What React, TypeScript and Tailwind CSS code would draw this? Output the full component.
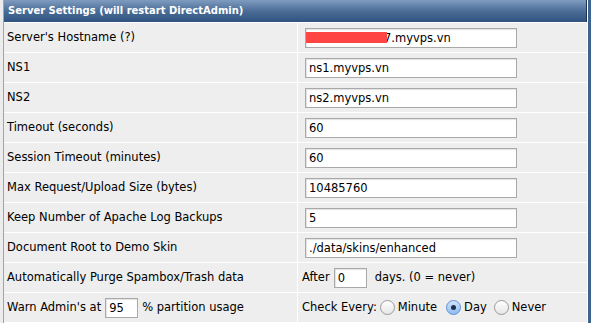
import React from "react";

const font = { fontFamily: '"DejaVu Sans", Verdana, sans-serif' };

function TextBox({ value, w = "w-[212px]", pad = "px-[3px]" }: { value: string; w?: string; pad?: string }) {
  return (
    <input
      readOnly
      value={value}
      className={`${w} ${pad} h-[20px] border border-[#a9a9a9] bg-white text-[11.5px] text-black outline-none shadow-[inset_1px_1px_1px_rgba(0,0,0,0.12)]`}
      style={font}
    />
  );
}

function Radio({ checked }: { checked?: boolean }) {
  return (
    <span
      className={`inline-flex h-[15px] w-[15px] items-center justify-center rounded-full border ${
        checked ? "border-[#5a8fd6] bg-gradient-to-b from-[#cfe3fb] to-[#8fbdf2]" : "border-[#9a9a9a] bg-gradient-to-b from-white to-[#e6e6e6]"
      }`}
    >
      {checked && <span className="h-[5px] w-[5px] rounded-full bg-[#1d2f4a]" />}
    </span>
  );
}

const rows: [string, string][] = [
  ["NS1", "ns1.myvps.vn"],
  ["NS2", "ns2.myvps.vn"],
  ["Timeout (seconds)", "60"],
  ["Session Timeout (minutes)", "60"],
  ["Max Request/Upload Size (bytes)", "10485760"],
  ["Keep Number of Apache Log Backups", "5"],
  ["Document Root to Demo Skin", "./data/skins/enhanced"],
];

export default function App() {
  return (
    <div className="flex h-[323px] w-[591px] overflow-hidden bg-white text-[11.5px] text-black" style={font}>
      <div className="w-[3px] bg-[#ececec]" />
      <div className="w-[1px] bg-[#8ea8c6]" />
      <div className="flex w-[583px] flex-col gap-[1px] bg-white">
        <div
          className="flex h-[22px] items-center border-r border-[#1e3350] bg-gradient-to-b from-[#7f9cbf] via-[#4b6d97] to-[#2f5480] pl-[4px] text-[11.1px] font-bold text-white"
          style={{ fontFamily: '"DejaVu Sans Condensed", "DejaVu Sans", Verdana, sans-serif', fontStretch: "condensed" }}
        >
          Server Settings (will restart DirectAdmin)
        </div>
        <div className="grid grid-cols-[293px_1fr] gap-[1px]">
          <div className="flex h-[29px] items-center bg-[#eeeeee] pl-[3px]">Server's Hostname (?)</div>
          <div className="flex h-[29px] items-center bg-[#eeeeee] pl-[7px]">
            <div className="relative">
              <TextBox value="7.myvps.vn" pad="pl-[78px] pr-[3px]" />
              <span className="absolute left-[1px] top-[4px] h-[11px] w-[81px] bg-[#ff4444]" />
            </div>
          </div>
          {rows.map(([label, val]) => (
            <React.Fragment key={label}>
              <div className="flex h-[29px] items-center bg-[#eeeeee] pl-[3px]">{label}</div>
              <div className="flex h-[29px] items-center bg-[#eeeeee] pl-[7px]">
                <TextBox value={val} />
              </div>
            </React.Fragment>
          ))}
          <div className="flex h-[29px] items-center bg-[#eeeeee] pl-[3px]">Automatically Purge Spambox/Trash data</div>
          <div className="flex h-[29px] items-center bg-[#eeeeee] pl-[4px]">
            <span>After</span>
            <span className="ml-[4px]">
              <TextBox value="0" w="w-[33px]" />
            </span>
            <span className="ml-[8px]">days. (0 = never)</span>
          </div>
          <div className="flex h-[29px] items-center bg-[#eeeeee] pl-[3px]">
            <span>Warn Admin's at</span>
            <span className="ml-[4px]">
              <TextBox value="95" w="w-[33px]" />
            </span>
            <span className="ml-[4px]">% partition usage</span>
          </div>
          <div className="flex h-[29px] items-center bg-[#eeeeee] pl-[4px]">
            <span>Check Every:</span>
            <span className="ml-[3px] flex items-center gap-[3px]">
              <Radio /> Minute
            </span>
            <span className="ml-[9px] flex items-center gap-[3px]">
              <Radio checked /> Day
            </span>
            <span className="ml-[7px] flex items-center gap-[3px]">
              <Radio /> Never
            </span>
          </div>
        </div>
      </div>
      <div className="w-[1px] bg-white" />
      <div className="flex-1 bg-[#3d6391]" />
    </div>
  );
}
